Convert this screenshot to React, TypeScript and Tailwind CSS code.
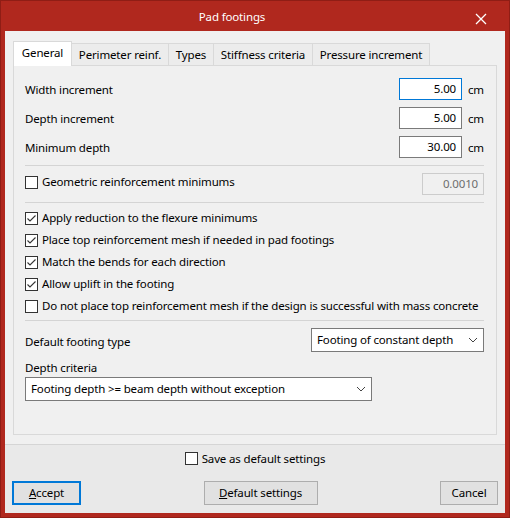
import React from "react";

function Box({ checked }: { checked?: boolean }) {
  return (
    <span className="w-[13px] h-[13px] border border-[#333333] bg-white flex items-center justify-center shrink-0">
      {checked && (
        <svg width="11" height="11" viewBox="0 0 11 11">
          <polyline points="1.5,5.5 4,8 9.5,2.5" fill="none" stroke="#333333" strokeWidth="1.1" />
        </svg>
      )}
    </span>
  );
}

function CheckRow({ label, checked }: { label: string; checked?: boolean }) {
  return (
    <div className="h-[22px] flex items-center gap-[4px]">
      <Box checked={checked} />
      <span className="whitespace-nowrap">{label}</span>
    </div>
  );
}

function Chevron() {
  return (
    <svg width="10" height="6" viewBox="0 0 10 6" className="shrink-0">
      <polyline points="1,1 5,5 9,1" fill="none" stroke="#444444" strokeWidth="1" />
    </svg>
  );
}

function NumRow({ label, value, focused }: { label: string; value: string; focused?: boolean }) {
  return (
    <div className="h-[22px] flex items-center justify-between">
      <span className="pt-[1px]">{label}</span>
      <div className="flex items-center">
        <div
          className={
            focused
              ? "w-[63px] h-[22px] border border-[#0078d7] bg-white flex items-center justify-end pr-[5px]"
              : "w-[63px] h-[22px] border border-[#7a7a7a] bg-white flex items-center justify-end pr-[5px]"
          }
        >
          {value}
        </div>
        <span className="w-[22px] pl-[6px] pt-[1px]">cm</span>
      </div>
    </div>
  );
}

export default function App() {
  const tabs = [
    { t: "Perimeter reinf.", w: "w-[97px]" },
    { t: "Types", w: "w-[45px]" },
    { t: "Stiffness criteria", w: "w-[99px]" },
    { t: "Pressure increment", w: "w-[117px]" },
  ];
  return (
    <div className="w-[510px] h-[518px] bg-[#b0281e] border border-[#8f1d15] flex flex-col font-['Noto_Sans',sans-serif] text-[11.5px] tracking-[-0.15px] leading-[16px] text-black">
      <div className="h-[30px] shrink-0 flex items-center justify-center relative text-white pr-[46px]">
        <span className="mt-[2px]">Pad footings</span>
        <svg width="12" height="12" viewBox="0 0 12 12" className="absolute right-[22px] top-[12px]">
          <path d="M1 1 L11 11 M11 1 L1 11" stroke="white" strokeWidth="1.3" />
        </svg>
      </div>
      <div className="flex-1 mx-[4px] mb-[4px] bg-[#f0f0f0] flex flex-col">
        <div className="pt-[10px] px-[8px]">
          <div className="flex items-end h-[24px] relative z-10">
            <div className="w-[59px] h-[25px] -mb-px bg-white border-l border-t border-r border-[#d9d9d9] flex items-center justify-center pb-[2px]">
              General
            </div>
            {tabs.map((x) => (
              <div
                key={x.t}
                className={`${x.w} h-[22px] bg-[#ececec] border-t border-r border-[#d9d9d9] flex items-center justify-center`}
              >
                {x.t}
              </div>
            ))}
          </div>
          <div className="h-[370px] border border-[#d9d9d9] bg-[#f0f0f0] pl-[11px] pr-[12px] pt-[12px] flex flex-col">
            <NumRow label="Width increment" value="5.00" focused />
            <div className="mt-[7px]">
              <NumRow label="Depth increment" value="5.00" />
            </div>
            <div className="mt-[7px]">
              <NumRow label="Minimum depth" value="30.00" />
            </div>
            <div className="mt-[7px] h-px bg-[#d4d4d4]" />
            <div className="mt-[7px] h-[22px] flex items-center justify-between">
              <div className="flex items-center gap-[4px] self-start pt-[1px]">
                <Box />
                <span>Geometric reinforcement minimums</span>
              </div>
              <div className="w-[62px] h-[22px] border border-[#cccccc] bg-[#f0f0f0] text-[#6d6d6d] flex items-center justify-end pr-[5px]">
                0.0010
              </div>
            </div>
            <div className="mt-[7px] h-px bg-[#d4d4d4]" />
            <div className="mt-[4px] flex flex-col">
              <CheckRow label="Apply reduction to the flexure minimums" checked />
              <CheckRow label="Place top reinforcement mesh if needed in pad footings" checked />
              <CheckRow label="Match the bends for each direction" checked />
              <CheckRow label="Allow uplift in the footing" checked />
              <CheckRow label="Do not place top reinforcement mesh if the design is successful with mass concrete" />
            </div>
            <div className="mt-[3px] h-px bg-[#d4d4d4]" />
            <div className="mt-[7px] h-[24px] flex items-center justify-between">
              <span className="pt-[3px]">Default footing type</span>
              <div className="w-[173px] h-[24px] border border-[#7a7a7a] bg-white flex items-center justify-between pl-[5px] pr-[5px]">
                <span>Footing of constant depth</span>
                <Chevron />
              </div>
            </div>
            <div className="mt-[8px]">Depth criteria</div>
            <div className="mt-[1px] w-[347px] h-[24px] border border-[#7a7a7a] bg-white flex items-center justify-between pl-[5px] pr-[5px]">
              <span>Footing depth &gt;= beam depth without exception</span>
              <Chevron />
            </div>
          </div>
        </div>
        <div className="mt-[9px] flex-1 border-t border-[#d5d5d5] bg-[#e9e9e9] flex flex-col px-[7px]">
          <div className="mt-[7px] h-[13px] flex items-center justify-center gap-[4px]">
            <Box />
            <span>Save as default settings</span>
          </div>
          <div className="mt-[16px] flex items-center justify-between">
            <div className="w-[69px] h-[24px] border-2 border-[#0078d7] bg-[#e1e1e1] flex items-center justify-center">
              <span>
                <span className="underline">A</span>ccept
              </span>
            </div>
            <div className="w-[114px] h-[24px] border border-[#adadad] bg-[#e1e1e1] flex items-center justify-center">
              <span>
                <span className="underline">D</span>efault settings
              </span>
            </div>
            <div className="w-[58px] h-[24px] border border-[#adadad] bg-[#e1e1e1] flex items-center justify-center">
              Cancel
            </div>
          </div>
        </div>
      </div>
    </div>
  );
}
